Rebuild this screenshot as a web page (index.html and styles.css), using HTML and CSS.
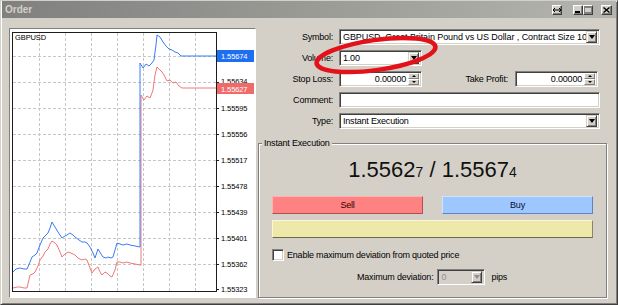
FILE: index.html
```html
<!DOCTYPE html>
<html>
<head>
<meta charset="utf-8">
<link rel="stylesheet" href="styles.css">
</head>
<body>
<div class="window">
  <div class="titlebar">
    <span class="title">Order</span>
    <div class="tb-btns">
      <span class="tbtn tb-resize"><svg width="8" height="6" viewBox="0 0 8 6"><path d="M0 3h8M2 1L0 3l2 2M6 1l2 2-2 2" stroke="#000" fill="none" stroke-width="1"/></svg></span>
      <span class="tbtn tb-min"><svg width="6" height="6" viewBox="0 0 6 6"><rect x="0" y="4" width="5" height="2" fill="#000"/></svg></span>
      <span class="tbtn tb-max"><svg width="8" height="7" viewBox="0 0 8 7"><rect x="0.5" y="0.5" width="7" height="6" fill="none" stroke="#808080"/><rect x="0" y="0" width="8" height="2" fill="#808080"/></svg></span>
      <span class="tbtn tb-close"><svg width="7" height="6" viewBox="0 0 7 6"><path d="M0.5 0.5l6 5M6.5 0.5l-6 5" stroke="#000" stroke-width="1.4"/></svg></span>
    </div>
  </div>
  <div class="content">
    <div class="chart-panel">
      <svg class="chart" width="245" height="268" viewBox="10 29 245 268">
        <g stroke="#c6c6c6" stroke-width="1" stroke-dasharray="3 2">
          <path d="M39.5 33V291M65.5 33V291M91.5 33V291M117.5 33V291M143.5 33V291M169.5 33V291M195.5 33V291"/>
          <path d="M13 56.5H216M13 82.5H216M13 108.5H216M13 134.5H216M13 160.5H216M13 186.5H216M13 212.5H216M13 238.5H216M13 264.5H216"/>
        </g>
        <polyline fill="none" stroke="#f07878" stroke-width="1" points="13,288 17,287 20,287 24,288 27,288 30,275 33,274 35,272 38,266 40,260 43,256 45,252 48,249 50,244 52,241 55,243 57,245 60,252 62,257 65,254 68,252 71,253 75,255 78,258 82,260 85,259 87,260 90,268 92,273 95,269 98,267 100,272 102,275 105,272 107,273 110,276 112,277 115,270 117,262 120,262 123,263 127,262 130,263 135,264 140,265 141,265 141,95 144,100 147,96 150,98 152,93 153,90 155,75 157,67 160,70 162,72 164,75 167,81 170,80 173,83 176,82 179,86 182,88 216,88"/>
        <polyline fill="none" stroke="#3a7cf8" stroke-width="1" points="13,272 16,269 20,268 24,269 27,269 30,262 32,257 35,255 37,253 40,245 43,238 46,235 48,233 50,228 52,222 55,227 58,232 62,238 65,236 67,235 70,233 73,235 75,237 79,240 82,242 85,242 87,243 90,247 93,253 95,258 98,249 101,254 103,257 106,258 108,257 111,258 113,257 115,250 117,243 120,244 123,245 127,244 130,245 135,246 140,247 140,63 143,68 146,64 149,66 152,63 154,60 155,52 156,45 157,35 160,37 163,42 166,46 169,49 172,50 175,52 178,53 181,56 185,56 216,56"/>
        <rect x="12.5" y="32.5" width="204" height="259" fill="none" stroke="#1c1c1c" stroke-width="1"/>
        <g stroke="#1c1c1c" stroke-width="1">
          <path d="M216 56.5h3M216 82.5h3M216 108.5h3M216 134.5h3M216 160.5h3M216 186.5h3M216 212.5h3M216 238.5h3M216 264.5h3M216 289.5h3"/>
        </g>
        <g class="axis" font-size="7.5" fill="#000">
          <text x="15" y="40">GBPUSD</text>
          <text x="221" y="84">1.55634</text>
          <text x="221" y="111">1.55595</text>
          <text x="221" y="137">1.55556</text>
          <text x="221" y="163">1.55517</text>
          <text x="221" y="189">1.55478</text>
          <text x="221" y="215">1.55439</text>
          <text x="221" y="241">1.55401</text>
          <text x="221" y="267">1.55362</text>
          <text x="221" y="292">1.55323</text>
        </g>
        <rect x="217" y="50" width="37" height="12" fill="#1e6ff0"/>
        <text class="axis" x="221" y="59" font-size="7.5" fill="#fff">1.55674</text>
        <rect x="217" y="83" width="37" height="11" fill="#f06a6a"/>
        <text class="axis" x="221" y="91.5" font-size="7.5" fill="#fff">1.55627</text>
      </svg>
    </div>
    <div class="form">
      <div class="row">
        <span class="lbl">Symbol:</span>
        <div class="field f-wide">
          <span class="ftext sym">GBPUSD, Great Britain Pound vs US Dollar , Contract Size 100,000</span>
          <span class="dd"><i class="tri"></i></span>
        </div>
      </div>
      <div class="row">
        <span class="lbl">Volume:</span>
        <div class="field f-short">
          <span class="ftext">1.00</span>
          <span class="dd"><i class="tri"></i></span>
        </div>
      </div>
      <div class="row">
        <span class="lbl">Stop Loss:</span>
        <div class="field f-short">
          <span class="ftext num">0.00000</span>
          <span class="spin"><span class="sb"><i class="tri-up"></i></span><span class="sb"><i class="tri-dn"></i></span></span>
        </div>
        <span class="lbl lbl-tp">Take Profit:</span>
        <div class="field f-short">
          <span class="ftext num">0.00000</span>
          <span class="spin"><span class="sb"><i class="tri-up"></i></span><span class="sb"><i class="tri-dn"></i></span></span>
        </div>
      </div>
      <div class="row">
        <span class="lbl">Comment:</span>
        <div class="field f-wide"></div>
      </div>
      <div class="row last">
        <span class="lbl">Type:</span>
        <div class="field f-wide">
          <span class="ftext">Instant Execution</span>
          <span class="dd"><i class="tri"></i></span>
        </div>
      </div>
      <fieldset class="group">
        <legend>Instant Execution</legend>
        <div class="price">1.5562<small>7</small> / 1.5567<small>4</small></div>
        <div class="actions">
          <span class="btn sell">Sell</span>
          <span class="btn buy">Buy</span>
        </div>
        <div class="yellow"></div>
        <div class="check-row">
          <span class="checkbox"></span>
          <span>Enable maximum deviation from quoted price</span>
        </div>
        <div class="dev-row">
          <span>Maximum deviation:</span>
          <div class="field f-dev disabled">
            <span class="ftext">0</span>
            <span class="dd"><i class="tri"></i></span>
          </div>
          <span class="pips">pips</span>
        </div>
      </fieldset>
    </div>
  </div>
  <svg class="annot" width="134" height="46" viewBox="0 0 134 46">
    <ellipse cx="66" cy="23" rx="60" ry="15" transform="rotate(-8 66 23)" fill="none" stroke="#e3121a" stroke-width="4.5"/>
  </svg>
</div>
</body>
</html>
```
FILE: styles.css
```css
* { box-sizing: border-box; }
body {
  margin: 0;
  font-family: "Liberation Sans", Arial, sans-serif;
  font-size: 9px;
  letter-spacing: -0.2px;
  color: #000;
  background: #d4d0c8;
}
.window {
  position: relative;
  width: 618px;
  height: 305px;
  background: #d4d0c8;
  border: 1px solid;
  border-color: #d4d0c8 #404040 #404040 #d4d0c8;
  box-shadow: inset 1px 1px #fff, inset -1px -1px #808080;
  display: flex;
  flex-direction: column;
}
.titlebar {
  height: 17px;
  margin: 0 1px;
  background: linear-gradient(to right, #808080, #9c9c98 55%, #b4b4b0);
  display: flex;
  align-items: center;
  padding-left: 3px;
}
.title {
  color: #d4d0c8;
  font-weight: bold;
  font-size: 10px;
  letter-spacing: 0;
}
.tb-btns {
  margin-left: auto;
  display: flex;
  align-items: center;
  margin-right: 4px;
}
.tbtn {
  width: 10px;
  height: 10px;
  background: #d4d0c8;
  border: 1px solid;
  border-color: #fff #404040 #404040 #fff;
  box-shadow: inset -1px -1px #808080;
  display: flex;
  align-items: center;
  justify-content: center;
}
.tb-resize { margin-right: 11px; }
.tb-max { margin-right: 8px; }
.tb-close { width: 11px; }
.content {
  display: flex;
  padding: 10px 0 0 8px;
}
.chart-panel {
  width: 247px;
  height: 270px;
  background: #fff;
  border: 1px solid;
  border-color: #808080 #fff #fff #808080;
}
.chart { display: block; }
.axis { font-family: "Liberation Sans", Arial, sans-serif; letter-spacing: -0.1px; }
.form {
  width: 349px;
  margin-left: 2px;
  margin-top: 1px;
}
.row {
  display: flex;
  align-items: center;
  height: 16px;
  margin-bottom: 5px;
}
.row.last { margin-bottom: 0; }
.lbl {
  width: 75px;
  text-align: right;
  margin-right: 6px;
  flex: none;
}
.lbl-tp { width: 86px; margin-right: 7px; }
.field {
  height: 16px;
  background: #fff;
  border: 1px solid;
  border-color: #808080 #fff #fff #808080;
  box-shadow: inset 1px 1px #404040, inset -1px -1px #d4d0c8;
  display: flex;
  align-items: center;
  padding: 0 2px 0 3px;
  flex: none;
  overflow: hidden;
}
.f-wide { width: 261px; }
.f-short { width: 83px; }
.f-dev { width: 48px; }
.ftext {
  flex: 1;
  overflow: hidden;
  white-space: nowrap;
}
.ftext.sym { letter-spacing: -0.08px; }
.ftext.num { text-align: right; padding-right: 2px; }
.dd {
  width: 11px;
  height: 12px;
  flex: none;
  background: #d4d0c8;
  border: 1px solid;
  border-color: #d4d0c8 #404040 #404040 #d4d0c8;
  box-shadow: inset 1px 1px #fff, inset -1px -1px #808080;
  display: flex;
  align-items: center;
  justify-content: center;
}
.tri {
  width: 0;
  height: 0;
  border-left: 3px solid transparent;
  border-right: 3px solid transparent;
  border-top: 4px solid #000;
}
.spin {
  width: 11px;
  height: 12px;
  flex: none;
  display: flex;
  flex-direction: column;
}
.sb {
  height: 6px;
  background: #d4d0c8;
  border: 1px solid;
  border-color: #fff #808080 #808080 #fff;
  display: flex;
  align-items: center;
  justify-content: center;
}
.tri-up, .tri-dn {
  width: 0;
  height: 0;
  border-left: 2px solid transparent;
  border-right: 2px solid transparent;
}
.tri-up { border-bottom: 2px solid #000; }
.tri-dn { border-top: 2px solid #000; }
.group {
  margin: 9px 0 0 0;
  padding: 0 13px 12px;
  border: 1px solid #808080;
  box-shadow: inset 1px 1px #fff, 1px 1px #fff;
  min-width: 0;
  width: 349px;
}
.group legend {
  line-height: 10px;
  padding: 0 2px;
  margin-left: -10px;
  background: #d4d0c8;
}
.price {
  margin-top: 9px;
  height: 26px;
  line-height: 26px;
  text-align: center;
  font-size: 22px;
  letter-spacing: 0;
  color: #111;
}
.price small { font-size: 14px; }
.actions {
  margin-top: 13px;
  display: grid;
  grid-template-columns: 1fr 1fr;
  column-gap: 19px;
}
.btn {
  height: 18px;
  display: flex;
  align-items: center;
  justify-content: center;
  border: 1px solid;
}
.sell {
  background: #ff8282;
  border-color: #ffb0b0 #b05050 #b05050 #ffb0b0;
  color: #300;
}
.buy {
  background: #9ec6ff;
  border-color: #cfe3ff #5d86c0 #5d86c0 #cfe3ff;
  color: #001030;
}
.yellow {
  margin-top: 6px;
  height: 18px;
  background: #eee9aa;
  border: 1px solid;
  border-color: #fbf8d8 #8a8660 #6e6a48 #fbf8d8;
}
.check-row {
  margin-top: 11px;
  height: 12px;
  display: flex;
  align-items: center;
}
.checkbox {
  width: 12px;
  height: 12px;
  background: #fff;
  border: 1px solid;
  border-color: #808080 #fff #fff #808080;
  box-shadow: inset 1px 1px #404040, inset -1px -1px #d4d0c8;
  margin-right: 3px;
}
.dev-row {
  margin-top: 8px;
  height: 16px;
  display: flex;
  align-items: center;
  padding-left: 85px;
}
.dev-row .f-dev { margin-left: 4px; }
.disabled { background: #d4d0c8; color: #909090; }
.disabled .tri { border-top-color: #909090; }
.pips { margin-left: 6px; }
.annot {
  position: absolute;
  left: 309px;
  top: 31px;
}
```
